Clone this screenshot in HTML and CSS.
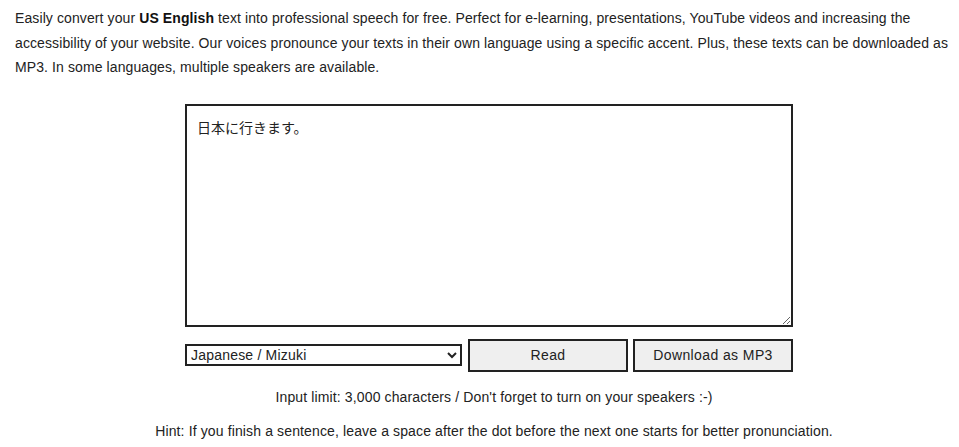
FILE: index.html
```html
<!DOCTYPE html>
<html lang="en">
<head>
    <meta charset="UTF-8">
    <meta name="viewport" content="width=device-width, initial-scale=1.0">
    <title>Text to Speech</title>
    <link rel="stylesheet" href="styles.css">
</head>
<body>
    <div class="page">
        <p class="intro">Easily convert your <strong>US English</strong> text into professional speech for free. Perfect for e-learning, presentations, YouTube videos and increasing the accessibility of your website. Our voices pronounce your texts in their own language using a specific accent. Plus, these texts can be downloaded as MP3. In some languages, multiple speakers are available.</p>

        <div class="tool">
            <textarea class="text-input" id="text">日本に行きます。</textarea>

            <div class="controls">
                <select class="voice-select" id="voice">
                    <option>Japanese / Mizuki</option>
                    <option>US English / Joanna</option>
                    <option>US English / Matthew</option>
                </select>
                <button type="button" class="action-button">Read</button>
                <button type="button" class="action-button">Download as MP3</button>
            </div>
        </div>

        <div class="notes">
            <p class="limit">Input limit: 3,000 characters / Don't forget to turn on your speakers :-)</p>
            <p class="hint">Hint: If you finish a sentence, leave a space after the dot before the next one starts for better pronunciation.</p>
        </div>
    </div>
</body>
</html>
```

FILE: styles.css
```css
* {
    margin: 0;
    padding: 0;
    box-sizing: border-box;
}

body {
    background: #fff;
    color: #222;
    font-family: "Liberation Sans", Arial, sans-serif;
    font-size: 14px;
}

.page {
    padding: 6px 0 0 15px;
}

.intro {
    line-height: 24.5px;
    width: 942px;
    letter-spacing: 0.1px;
}

.intro strong {
    color: #111;
}

.tool {
    width: 608px;
    margin: 24px 0 0 170px;
}

.text-input {
    display: block;
    width: 608px;
    height: 223px;
    border: 2px solid #222;
    padding: 11px 10px;
    font-family: "Liberation Sans", "Noto Sans CJK JP", sans-serif;
    font-size: 14px;
    color: #222;
    resize: vertical;
    outline: none;
}

.controls {
    display: flex;
    align-items: center;
    margin-top: 12px;
}

.voice-select {
    width: 277px;
    height: 22px;
    border: 2px solid #222;
    border-radius: 0;
    background: #fff;
    font-family: "Liberation Sans", Arial, sans-serif;
    font-size: 14px;
    letter-spacing: 0.2px;
    color: #222;
    padding: 0;
    margin-right: 6px;
}

.action-button {
    width: 160px;
    height: 33px;
    border: 2px solid #222;
    background: #efefef;
    font-family: "Liberation Sans", Arial, sans-serif;
    font-size: 14px;
    letter-spacing: 0.4px;
    color: #222;
    cursor: pointer;
}

.action-button + .action-button {
    margin-left: 5px;
}

.action-button:hover {
    background: #e2e2e2;
}

.notes {
    width: 700px;
    margin-left: 129px;
    text-align: center;
    letter-spacing: 0.13px;
}

.limit {
    margin-top: 17px;
}

.hint {
    margin-top: 18px;
}
```
